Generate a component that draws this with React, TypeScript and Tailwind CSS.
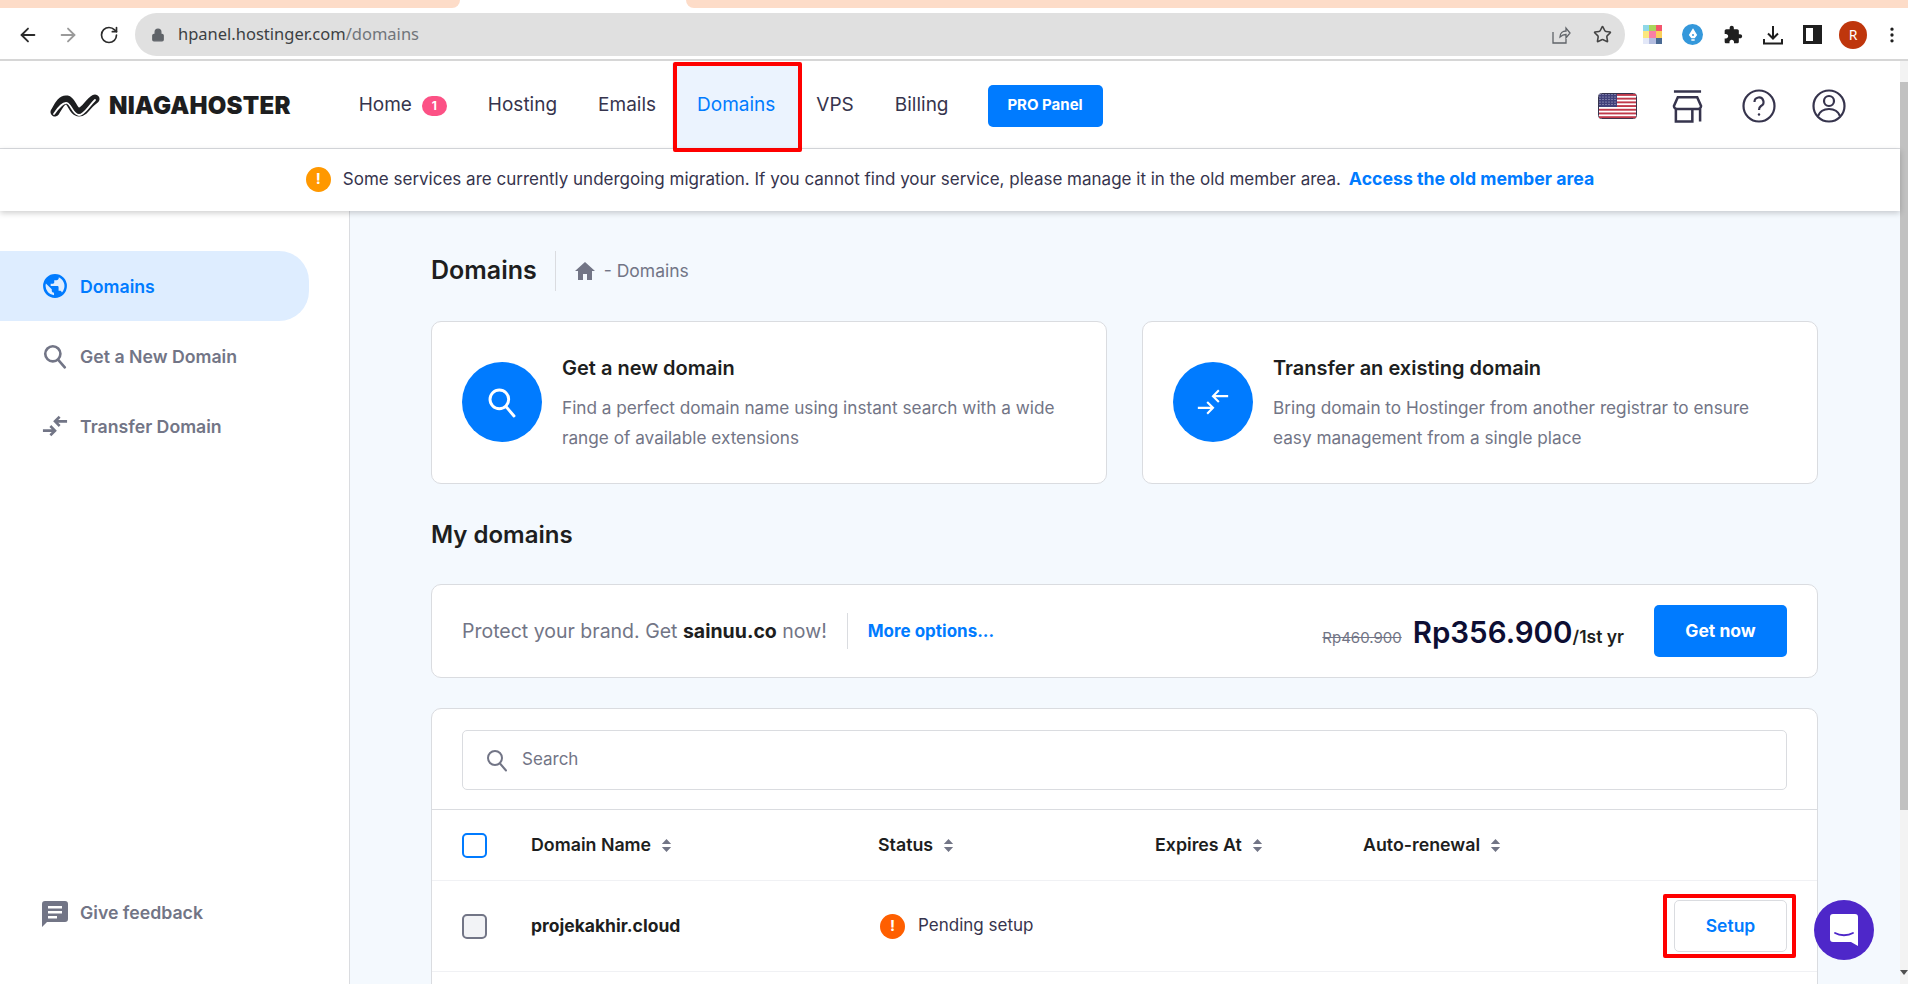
import { ArrowLeft, ArrowRight, RotateCw, Lock, Star, EllipsisVertical } from "lucide-react";

const FONT = "font-['Inter',sans-serif]";

function SearchGlyph({ className, strokeWidth = 2 }: { className?: string; strokeWidth?: number }) {
  return (
    <svg viewBox="0 0 24 24" fill="none" stroke="currentColor" strokeWidth={strokeWidth} className={className}>
      <circle cx="10" cy="10" r="7" />
      <path d="M15 15.5 21 22.5" strokeLinecap="round" />
    </svg>
  );
}

function TransferGlyph({ className, strokeWidth = 2 }: { className?: string; strokeWidth?: number }) {
  return (
    <svg viewBox="0 0 28 24" fill="none" stroke="currentColor" strokeWidth={strokeWidth} className={className}>
      <path d="M1 17h12M9 12l5 5-5 5M27 7H15M19 2l-5 5 5 5" />
    </svg>
  );
}

function SortIcon() {
  return (
    <svg viewBox="0 0 10 14" className="w-[11px] h-[13px] fill-[#727586]">
      <path d="M5 0 10 5.5H0zM5 14 0 8.5h10z" />
    </svg>
  );
}

function Logo() {
  return (
    <div className="flex items-center gap-[9px]">
      <svg viewBox="0 0 50 24" className="w-[50px] h-[24px]" fill="none" strokeLinecap="round" strokeLinejoin="round">
        <path d="M5 18C9 11 12 5 17 6c5 1 6 12 12 12 6 0 9-9 16-13" stroke="#1d1e20" strokeWidth="9" />
        <path d="M4 20C9 13 13 8 17 9c4 1 6 12 12 12 5 0 9-8 16-15" stroke="#fff" strokeWidth="1.8" />
      </svg>
      <span className="text-[24px] font-black tracking-[0.2px] text-[#1d1e20] leading-none">NIAGAHOSTER</span>
    </div>
  );
}

function NavLink({ label, badge }: { label: string; badge?: string }) {
  return (
    <a className="flex items-center gap-[10px] text-[19px] text-[#36344d]">
      {label}
      {badge && (
        <span className="flex items-center justify-center w-[25px] h-[20px] rounded-full bg-[#fc5185] text-white text-[12px] font-bold">
          {badge}
        </span>
      )}
    </a>
  );
}

function Flag() {
  const stripes = [0, 1, 2, 3, 4, 5, 6];
  const rows = [1.5, 4, 6.5, 9, 11.5];
  const cols = [2, 5, 8, 11, 14, 17];
  return (
    <svg viewBox="0 0 39 26" className="w-[39px] h-[26px]">
      <rect x="0.5" y="0.5" width="38" height="25" rx="3" fill="#fff" stroke="#36344d" />
      {stripes.map((i) => (
        <rect key={i} x="1" y={1 + i * 3.7} width="37" height="1.900" fill="#c0394b" />
      ))}
      <rect x="1" y="1" width="18" height="13" fill="#41407a" />
      {rows.map((y) =>
        cols.map((x) => <circle key={`${x}-${y}`} cx={x} cy={y} r="0.6" fill="#c9c9e0" />)
      )}
    </svg>
  );
}

function ActionCard({ icon, title, lines }: { icon: React.ReactNode; title: string; lines: string[] }) {
  return (
    <div className="flex-1 h-[163px] bg-white border border-[#dadce0] rounded-[10px] pl-[30px] pt-[31px] flex gap-[20px]">
      <div className="w-[80px] h-[80px] mt-[9px] rounded-full bg-[#007bff] flex items-center justify-center text-white shrink-0">
        {icon}
      </div>
      <div>
        <h3 className="text-[20px] font-semibold text-[#1d1e20] leading-[30px]">{title}</h3>
        <p className="mt-[10px] text-[17.2px] leading-[30px] text-[#727586]">
          {lines[0]}
          <br />
          {lines[1]}
        </p>
      </div>
    </div>
  );
}

function App() {
  return (
    <div className={`${FONT} relative h-[984px] w-full overflow-hidden flex flex-col bg-white`}>
      {/* Browser tab strip */}
      <div className="h-[8px] shrink-0 flex justify-between">
        <div className="w-[460px] bg-[#fddcc8] rounded-br-[10px]" />
        <div className="w-[1222px] bg-[#fddcc8] rounded-bl-[10px]" />
      </div>

      {/* Browser toolbar */}
      <div className="h-[53px] shrink-0 flex items-center border-b-2 border-[#d6d6d6] pl-[17px] pt-[2px] font-['Noto_Sans',sans-serif]">
        <ArrowLeft className="w-[22px] h-[22px] text-[#2b2b2b] shrink-0" />
        <ArrowRight className="w-[22px] h-[22px] ml-[18px] text-[#9a9a9a] shrink-0" />
        <RotateCw className="w-[20px] h-[20px] ml-[20px] text-[#2b2b2b] shrink-0" />
        <div className="ml-[16px] w-[1490px] h-[43px] shrink-0 rounded-full bg-[#e0e0e0] flex items-center pl-[16px] pr-[13px]">
          <Lock className="w-[14px] h-[14px] text-[#5f6368] fill-[#5f6368]" />
          <span className="ml-[13px] text-[16.5px] text-[#3c4043]">
            hpanel.hostinger.com<span className="text-[#70757a]">/domains</span>
          </span>
          <div className="ml-auto flex items-center gap-[22px] text-[#5f6368]">
            <svg viewBox="0 0 20 20" className="w-[20px] h-[20px]" fill="none" stroke="currentColor" strokeWidth="1.3">
              <path d="M2 7v11h13v-4M9 12c0-4 3-6 6-6V3l4 5-4 5V9.500c-2 0-4 .5-6 2.500z" />
            </svg>
            <Star className="w-[19px] h-[19px] text-[#444]" />
          </div>
        </div>
        <div className="ml-[18px] shrink-0 flex items-center">
          <div className="grid grid-cols-3 w-[19px] h-[19px]">
            <span className="bg-[#8fd8e8]" />
            <span className="bg-[#a9d65c]" />
            <span className="bg-[#f4556c]" />
            <span className="bg-[#fbe77e]" />
            <span className="bg-[#fb7fa5]" />
            <span className="bg-[#fbcf5a]" />
            <span className="bg-[#e3e8f8]" />
            <span className="bg-[#b4bde0]" />
            <span className="bg-[#4a6a94]" />
          </div>
          <div className="ml-[20px] w-[21px] h-[21px] rounded-full bg-[#3498db] flex items-center justify-center">
            <svg viewBox="0 0 12 16" className="w-[10px] h-[14px] fill-white">
              <path d="M6 0 11 8 8 12H4L1 8zM4 13h4v2H4z" fillRule="evenodd" />
              <circle cx="6" cy="8" r="1.200" fill="#3498db" />
            </svg>
          </div>
          <svg viewBox="0 0 24 24" className="ml-[20px] w-[20px] h-[20px] fill-[#1f1f1f]">
            <path d="M20.500 11H19V7c0-1.100-.9-2-2-2h-4V3.500C13 2.120 11.880 1 10.500 1S8 2.120 8 3.500V5H4c-1.100 0-1.990.9-1.990 2v3.800H3.500c1.490 0 2.700 1.210 2.700 2.700s-1.210 2.700-2.700 2.700H2V20c0 1.100.9 2 2 2h3.800v-1.500c0-1.490 1.210-2.700 2.700-2.700 1.490 0 2.700 1.210 2.700 2.700V22H17c1.100 0 2-.9 2-2v-4h1.500c1.380 0 2.500-1.120 2.500-2.500S21.880 11 20.500 11z" />
          </svg>
          <svg viewBox="0 0 20 20" className="ml-[20px] w-[20px] h-[20px]" fill="none" stroke="#1f1f1f" strokeWidth="2">
            <path d="M10 1v12M5 8.500l5 5 5-5M1 14v4.500h18V14" />
          </svg>
          <div className="ml-[20px] w-[19px] h-[19px] border-[3px] border-[#1f1f1f] flex justify-end">
            <div className="w-[6px] bg-[#1f1f1f]" />
          </div>
          <div className="ml-[17px] w-[28px] h-[28px] rounded-full bg-[#bf360c] text-white text-[14px] flex items-center justify-center">R</div>
          <EllipsisVertical className="ml-[15px] w-[20px] h-[20px] text-[#1f1f1f]" />
        </div>
      </div>

      <div className="flex-1 min-h-0 flex">
        <div className="flex-1 min-w-0 flex flex-col">
          {/* App header */}
          <header className="h-[88px] shrink-0 border-b border-[#dadce0] flex items-center pl-[50px] pt-[2px]">
            <Logo />
            <nav className="ml-[68px] flex items-center gap-[41px] h-full">
              <NavLink label="Home" badge="1" />
              <NavLink label="Hosting" />
              <NavLink label="Emails" />
              <a className="h-full flex items-center px-[25px] -mx-[25px] text-[19px] text-[#007bff] bg-[#ebf3fe]">Domains</a>
              <NavLink label="VPS" />
              <NavLink label="Billing" />
            </nav>
            <button className="ml-[39px] w-[115px] h-[42px] rounded-[5px] bg-[#007bff] text-white text-[15px] font-bold">PRO Panel</button>
            <div className="ml-auto mr-[54px] flex items-center text-[#36344d]">
              <Flag />
              <svg viewBox="0 0 32 34" className="ml-[35px] w-[31px] h-[34px]" fill="none" stroke="currentColor" strokeWidth="2.6">
                <path d="M2 2h28M6 8h20l4 9a3 3 0 0 1-3 3H5a3 3 0 0 1-3-3zM4 20v13h17V20M29 20v13" />
              </svg>
              <svg viewBox="0 0 34 34" className="ml-[39px] w-[34px] h-[34px]" fill="none" stroke="currentColor" strokeWidth="2.2">
                <circle cx="17" cy="17" r="15.500" />
                <path d="M12.500 13a4.500 4.500 0 1 1 6.500 4c-1.500 1-2 2-2 4" />
                <circle cx="17" cy="25.500" r="1.200" fill="currentColor" stroke="none" />
              </svg>
              <svg viewBox="0 0 34 34" className="ml-[36px] w-[34px] h-[34px]" fill="none" stroke="currentColor" strokeWidth="2.2">
                <circle cx="17" cy="17" r="15.500" />
                <circle cx="17" cy="12" r="5" />
                <path d="M6 27c2-5 6-7 11-7s9 2 11 7" />
              </svg>
            </div>
          </header>

          {/* Migration banner */}
          <div className="relative z-10 h-[62px] shrink-0 flex items-center justify-center gap-[12px] shadow-[0_2px_6px_rgba(0,0,0,0.2)] pb-[2px]">
            <span className="w-[25px] h-[25px] rounded-full bg-[#ff9800] text-white text-[15px] font-bold flex items-center justify-center">!</span>
            <p className="text-[17px] text-[#36344d]">
              Some services are currently undergoing migration. If you cannot find your service, please manage it in the old member area.
              <a className="ml-[8px] text-[17.7px] text-[#007bff] font-bold">Access the old member area</a>
            </p>
          </div>

          <div className="flex-1 min-h-0 flex">
            {/* Sidebar */}
            <aside className="w-[350px] shrink-0 border-r border-[#dadce0] pt-[40px] pb-[57px] flex flex-col text-[17.7px] font-semibold text-[#727586]">
              <a className="w-[309px] h-[70px] rounded-r-[30px] bg-[#deedff] text-[#007bff] flex items-center pl-[42px] gap-[12px]">
                <svg viewBox="0 0 24 24" className="w-[26px] h-[26px] fill-current">
                  <path d="M12 1a11 11 0 1 0 0 22 11 11 0 0 0 0-22zM3.300 12c0-.8.1-1.500.3-2.200L9 15v1.200c0 1.200 1 2.100 2.100 2.100v2.300A8.700 8.700 0 0 1 3.300 12zm15.100 5.900c-.3-.9-1.100-1.500-2-1.500h-1.100v-3.200c0-.6-.5-1.100-1.100-1.100H8v-2.200h2.200c.6 0 1.100-.5 1.100-1.100V6.600h2.100c1.200 0 2.100-1 2.100-2.100v-.5a8.700 8.700 0 0 1 2.900 13.900z" />
                </svg>
                <span className="mt-[2px]">Domains</span>
              </a>
              <a className="h-[70px] flex items-center pl-[42px] gap-[12px]">
                <SearchGlyph className="w-[26px] h-[26px]" strokeWidth={2.4} />
                <span className="mt-[2px]">Get a New Domain</span>
              </a>
              <a className="h-[70px] flex items-center pl-[42px] gap-[12px]">
                <TransferGlyph className="w-[26px] h-[24px]" strokeWidth={2.8} />
                <span className="mt-[2px]">Transfer Domain</span>
              </a>
              <a className="mt-auto flex items-center pl-[42px] gap-[12px]">
                <svg viewBox="0 0 26 26" className="w-[26px] h-[26px] fill-current">
                  <path d="M3 0h20a3 3 0 0 1 3 3v15a3 3 0 0 1-3 3H5l-5 5V3a3 3 0 0 1 3-3zm3 5v2.500h14V5zm0 5v2.500h14V10zm0 5v2.500h9V15z" fillRule="evenodd" />
                </svg>
                Give feedback
              </a>
            </aside>

            {/* Main content */}
            <main className="flex-1 min-w-0 bg-[#f4f9fe] pl-[81px] pr-[82px] pt-[40px] overflow-hidden">
              <div className="flex items-center h-[40px]">
                <h1 className="text-[25px] font-semibold text-[#1d1e20] pr-[18px] border-r border-[#dadce0] h-full flex items-center">Domains</h1>
                <svg viewBox="0 0 20 18" className="ml-[19px] w-[20px] h-[18px] fill-[#727586]">
                  <path d="M10 0 20 9h-3v9h-5v-6H8v6H3V9H0z" />
                </svg>
                <span className="ml-[9px] text-[17.500px] text-[#727586]">- Domains</span>
              </div>

              <div className="mt-[30px] flex gap-[35px]">
                <ActionCard
                  icon={<SearchGlyph className="w-[32px] h-[32px]" strokeWidth={2.2} />}
                  title="Get a new domain"
                  lines={["Find a perfect domain name using instant search with a wide", "range of available extensions"]}
                />
                <ActionCard
                  icon={<TransferGlyph className="w-[34px] h-[28px]" strokeWidth={1.8} />}
                  title="Transfer an existing domain"
                  lines={["Bring domain to Hostinger from another registrar to ensure", "easy management from a single place"]}
                />
              </div>

              <h2 className="mt-[33px] text-[24px] font-semibold text-[#1d1e20] leading-[36px]">My domains</h2>

              {/* Promo */}
              <div className="mt-[31px] h-[94px] bg-white border border-[#dadce0] rounded-[10px] flex items-center pl-[30px] pr-[30px]">
                <span className="mt-[2px] text-[19.500px] text-[#727586]">
                  Protect your brand. Get <b className="font-bold text-[#1d1e20]">sainuu.co</b> now!
                </span>
                <span className="ml-[20px] w-px h-[36px] bg-[#dadce0]" />
                <a className="mt-[2px] ml-[20px] text-[17px] font-bold text-[#007bff]">More options...</a>
                <div className="mt-[2px] ml-auto flex items-baseline">
                  <s className="text-[15px] text-[#727586]">Rp460.900</s>
                  <span className="ml-[11px] text-[29.500px] font-semibold text-[#0d0e33]">Rp356.900</span>
                  <span className="text-[17.500px] font-semibold text-[#1d1e20]">/1st yr</span>
                </div>
                <button className="ml-[30px] w-[133px] h-[52px] rounded-[5px] bg-[#007bff] text-white text-[17.500px] font-bold">Get now</button>
              </div>

              {/* Domain table */}
              <div className="mt-[30px] h-[400px] bg-white border border-[#dadce0] rounded-t-[10px]">
                <div className="h-[101px] px-[30px] pt-[21px] border-b border-[#dadce0]">
                  <div className="h-[60px] border border-[#dadce0] rounded-[5px] flex items-center pl-[22px] gap-[13px] text-[17px] text-[#727586]">
                    <SearchGlyph className="w-[24px] h-[24px]" />
                    Search
                  </div>
                </div>
                <div className="h-[71px] pl-[30px] flex items-center border-b border-[#f0f1f4] text-[17.8px] font-semibold text-[#1d1e20]">
                  <span className="w-[25px] h-[25px] border-2 border-[#007bff] rounded-[5px]" />
                  <span className="ml-[44px] w-[347px] flex items-center gap-[10px]">Domain Name <SortIcon /></span>
                  <span className="w-[277px] flex items-center gap-[10px]">Status <SortIcon /></span>
                  <span className="w-[208px] flex items-center gap-[10px]">Expires At <SortIcon /></span>
                  <span className="flex items-center gap-[10px]">Auto-renewal <SortIcon /></span>
                </div>
                <div className="h-[91px] pl-[30px] pr-[30px] flex items-center border-b border-[#f0f1f4] text-[17.500px]">
                  <span className="w-[25px] h-[25px] border-2 border-[#727586] bg-[#f2f3f6] rounded-[5px]" />
                  <span className="ml-[44px] w-[349px] font-bold text-[#1d1e20]">projekakhir.cloud</span>
                  <span className="flex items-center gap-[13px] text-[17px] text-[#36344d]">
                    <span className="w-[25px] h-[25px] rounded-full bg-[#fe5f00] text-white text-[15px] font-bold flex items-center justify-center">!</span>
                    Pending setup
                  </span>
                  <div className="ml-auto relative">
                    <button className="w-[113px] h-[52px] bg-white border border-[#dadce0] rounded-[5px] text-[#007bff] font-semibold">Setup</button>
                    <span className="absolute left-[-11px] right-[-9px] -inset-y-[6px] border-[4px] border-[#ff0000] rounded-[2px]" />
                  </div>
                </div>
              </div>
            </main>
          </div>
        </div>

        {/* Page scrollbar */}
        <div className="w-[8px] shrink-0 bg-[#f3f3f3] flex flex-col justify-between">
          <div>
            <div className="h-[21px]" />
            <div className="h-[728px] w-full bg-[#c1c1c1]" />
          </div>
          <div className="h-[14px] flex justify-end">
            <div className="w-0 h-0 border-x-[4px] border-x-transparent border-t-[5px] border-t-[#505050]" />
          </div>
        </div>
      </div>

      {/* Overlays */}
      <a className="absolute top-[62px] left-[673px] w-[129px] h-[90px] border-[4px] border-[#ff0000] rounded-[2px]" />
      <div className="absolute left-[1814px] top-[900px] w-[60px] h-[60px] rounded-full bg-[#4e27c9] flex items-center justify-center">
        <svg viewBox="0 0 28 32" className="w-[28px] h-[32px]">
          <path d="M3 0h22a3 3 0 0 1 3 3v29l-7-4H3a3 3 0 0 1-3-3V3a3 3 0 0 1 3-3z" fill="#fff" />
          <path d="M5 19c5 3 13 3 18 0" fill="none" stroke="#4e27c9" strokeWidth="1.800" strokeLinecap="round" />
        </svg>
      </div>
    </div>
  );
}

export default App;
